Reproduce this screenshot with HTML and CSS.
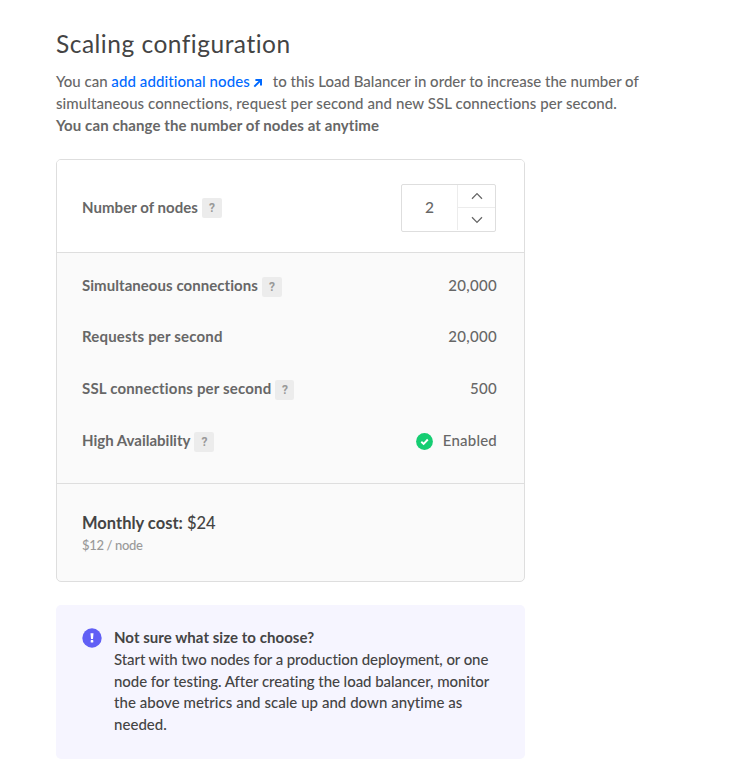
FILE: index.html
```html
<!DOCTYPE html>
<html lang="en">
<head>
<meta charset="utf-8">
<title>Scaling configuration</title>
<link rel="stylesheet" href="styles.css">
</head>
<body>
<main class="page">
  <h1 class="title">Scaling configuration</h1>
  <p class="intro">
    <span class="line first">You can <a class="link" href="#">add additional nodes</a><svg class="arrow" viewBox="0 0 10 10"><path d="M2.4 1.9H8V7.4M7.8 2.1L1.3 8.6"/></svg>to this Load Balancer in order to increase the number of</span>
    <span class="line second">simultaneous connections, request per second and new SSL connections per second.</span>
    <strong class="line emphasis">You can change the number of nodes at anytime</strong>
  </p>

  <section class="card">
    <div class="nodes">
      <div class="label"><span>Number of nodes</span><span class="help">?</span></div>
      <div class="stepper">
        <div class="value">2</div>
        <div class="buttons">
          <button class="step" aria-label="Increase"><svg viewBox="0 0 12 8"><path d="M1 6.8L6 1.6L11 6.8"/></svg></button>
          <button class="step down" aria-label="Decrease"><svg viewBox="0 0 12 8"><path d="M1 1.2L6 6.4L11 1.2"/></svg></button>
        </div>
      </div>
    </div>
    <div class="metrics">
      <div class="row"><div class="label"><span>Simultaneous connections</span><span class="help">?</span></div><span class="number">20,000</span></div>
      <div class="row"><div class="label wide"><span>Requests per second</span></div><span class="number">20,000</span></div>
      <div class="row"><div class="label wide"><span>SSL connections per second</span><span class="help narrow">?</span></div><span class="number">500</span></div>
      <div class="row"><div class="label tight"><span>High Availability</span><span class="help">?</span></div>
        <span class="enabled"><svg class="check" viewBox="0 0 17 17"><circle cx="8.5" cy="8.5" r="8.4"/><path d="M5.3 8.8L7.6 11L11.8 6.5"/></svg>Enabled</span></div>
    </div>
    <div class="cost">
      <div class="monthly"><strong>Monthly cost:</strong> <span>$24</span></div>
      <div class="per-node">$12 / node</div>
    </div>
  </section>

  <aside class="notice">
    <svg class="info" viewBox="0 0 20 20"><circle cx="10" cy="10" r="9.7"/><path d="M8.5 5.3H11.5L11 11H9Z"/><rect x="8.7" y="12.1" width="2.6" height="2.5" rx=".6"/></svg>
    <div class="notice-text">
      <strong>Not sure what size to choose?</strong>
      <p><span class="snug">Start with two nodes for a production deployment, or one</span><br>node for testing. After creating the load balancer, monitor<br><span class="loose">the above metrics and scale up and down anytime as<br>needed.</span></p>
    </div>
  </aside>
</main>
</body>
</html>
```
FILE: styles.css
```css
* { box-sizing: border-box; }
body {
  margin: 0;
  background: #fff;
  color: #676767;
  font: 500 15px/22px Lato, "Liberation Sans", sans-serif;
}
.page { width: 640px; padding: 28px 0 0 56px; }
.title {
  margin: 0 0 10px;
  color: #444;
  font-size: 24.5px;
  font-weight: 400;
  line-height: 32px;
  letter-spacing: .5px;
  white-space: nowrap;
}
.intro { margin: 0; }
.line { display: block; white-space: nowrap; }
.second { letter-spacing: .08px; }
.emphasis { font-weight: 700; letter-spacing: .09px; }
.link { color: #0069ff; text-decoration: none; letter-spacing: .08px; }
.arrow { width: 10px; height: 10px; margin: 0 10px 0 3px; vertical-align: -1px; fill: none; stroke: #0069ff; stroke-width: 2; }

.card {
  width: 469px;
  height: 423px;
  margin-top: 23px;
  border: 1px solid #dedede;
  border-radius: 5px;
  background: #fafafa;
  overflow: hidden;
}
.nodes {
  display: flex;
  justify-content: space-between;
  height: 93px;
  padding: 24px 28px 0 25px;
  background: #fff;
  border-bottom: 1px solid #dedede;
}
.nodes .label { margin-top: 12px; }
.nodes .help { margin-top: 2px; }
.label { display: flex; gap: 4px; height: 22px; font-weight: 700; letter-spacing: .05px; white-space: nowrap; }
.label.wide { letter-spacing: .18px; }
.label.tight { letter-spacing: 0; }
.help {
  width: 20px;
  height: 20px;
  margin-top: 3px;
  border-radius: 2px;
  background: #ececec;
  color: #999;
  font: 700 12px/20px Roboto, sans-serif;
  letter-spacing: 0;
  text-align: center;
}
.help.narrow { width: 19px; }
.stepper { display: flex; width: 95px; height: 48px; border: 1px solid #dedede; border-radius: 2px; }
.value { width: 55px; font-size: 15.5px; line-height: 44px; text-align: center; }
.buttons { flex: 1; height: 45px; border-left: 1px solid #ececec; }
.step {
  display: flex;
  align-items: center;
  justify-content: center;
  width: 100%;
  height: 23px;
  padding: 0;
  border: 0;
  border-bottom: 1px solid #ececec;
  background: none;
}
.step.down { height: 24px; border: 0; }
.step svg { width: 12px; height: 8px; fill: none; stroke: #676767; stroke-width: 1.3; }

.metrics {
  display: flex;
  flex-direction: column;
  gap: 29.67px;
  height: 231px;
  padding: 21px 27px 0 25px;
  border-bottom: 1px solid #dedede;
}
.row { display: flex; justify-content: space-between; height: 22px; }
.row:nth-child(2) { line-height: 21px; }
.number { letter-spacing: .3px; }
.enabled { display: flex; letter-spacing: .2px; }
.check { width: 17px; height: 17px; margin: 4px 10px 0 0; }
.check circle { fill: #15cd72; }
.check path { fill: none; stroke: #fff; stroke-width: 1.9; }

.cost { padding: 27px 25px 0; }
.monthly { color: #444; font-size: 16.5px; line-height: 24px; }
.monthly strong { font-weight: 700; }
.per-node { color: #999; font-size: 13px; line-height: 20px; letter-spacing: -.35px; }

.notice {
  display: flex;
  width: 469px;
  height: 154px;
  margin-top: 23px;
  padding: 22px 26px 0;
  border-radius: 5px;
  background: #f6f5ff;
  color: #444;
}
.info { flex: none; width: 20px; height: 20px; margin: 1px 12px 0 0; }
.info circle { fill: #615ff5; }
.info path, .info rect { fill: #fff; }
.notice-text { line-height: 21.75px; white-space: nowrap; }
.notice-text strong { display: block; font-weight: 700; letter-spacing: .05px; }
.notice-text p { margin: 0; letter-spacing: -.05px; }
.snug { letter-spacing: -.09px; }
.loose { letter-spacing: .04px; }
```
